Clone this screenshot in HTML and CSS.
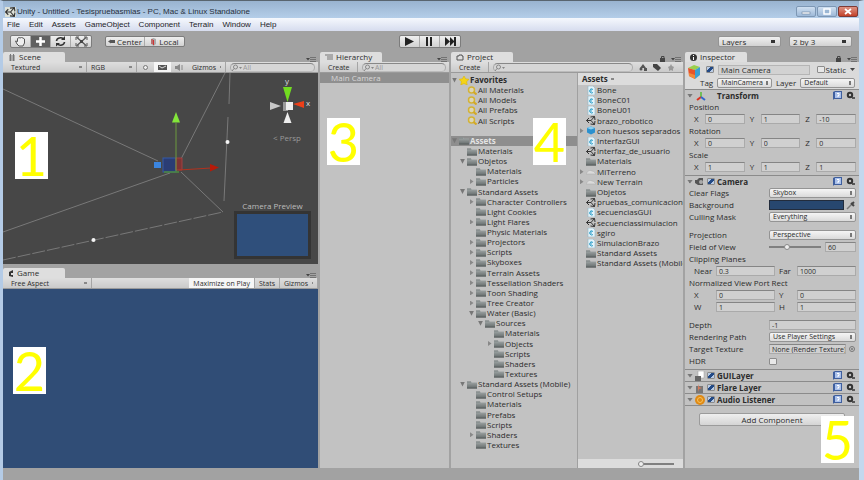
FILE: index.html
```html
<!DOCTYPE html>
<html lang="en">
<head>
<meta charset="utf-8">
<title>Unity - Untitled</title>
<link rel="stylesheet" href="styles.css">
</head>
<body>
<svg class="defs" aria-hidden="true">
  <defs>
    <linearGradient id="fg" x1="0" y1="0" x2="0" y2="1"><stop offset="0" stop-color="#a5abab"/><stop offset="1" stop-color="#626969"/></linearGradient>
    <symbol id="folder" viewBox="0 0 10 8"><path d="M0 1h4l1 1h5v6H0z" fill="url(#fg)"/><path d="M0 1.500h4" stroke="#7b8181"/><path d="M0 7.500h10" stroke="#5c6363"/></symbol>
    <symbol id="search" viewBox="0 0 10 9"><circle cx="4.500" cy="4" r="3" fill="#dcd6b8" stroke="#d3b336" stroke-width="1.500"/><path d="M6.500 6l3 2.500" stroke="#d3a926" stroke-width="2"/></symbol>
    <symbol id="star" viewBox="0 0 10 9"><path d="M5 0l1.600 2.800L10 3.300 7.600 5.700 8.200 9 5 7.500 1.800 9l.600-3.300L0 3.300l3.400-.500z" fill="#f5d416" stroke="#d6b000" stroke-width=".5"/></symbol>
    <symbol id="script" viewBox="0 0 10 9"><path d="M2 0h5l2 2v7H2z" fill="#e4f3fa" stroke="#8fb6c8" stroke-width=".6"/><path d="M7 3.500a2 2 0 1 0 0 3M5 2.500v4" stroke="#2f9fc9" fill="none"/></symbol>
    <symbol id="unity" viewBox="0 0 10 9"><path d="M3 2L0.500 4.500 3 7M0.500 4.500H5M4.500 1l4-.500.500 3.500M5 4.500L8.500.500M4.500 8l4 .500.500-3.500M5 4.500l3.500 4" stroke="#333" fill="none"/></symbol>
    <symbol id="prefab" viewBox="0 0 10 9"><path d="M1 2l4-1.500L9 2v4.500L5 8.500 1 6.500z" fill="#2b91cf"/><path d="M1 2l4 1.500L9 2 5 .500z" fill="#8bd0f2"/></symbol>
    <symbol id="terrain" viewBox="0 0 10 9"><path d="M0 7c2-4 4-4 6-3 2 0 3 2 4 3z" fill="#dadada" stroke="#aaa" stroke-width=".5"/></symbol>
    <symbol id="help" viewBox="0 0 9 9"><path d="M0 1l2-1h7v8H1L0 9z" fill="#3f5f9e"/><path d="M2 1h6v6H2z" fill="#a9c0ea"/><path d="M4 2.500h2v2H5v1.500" stroke="#fff" fill="none"/></symbol>
    <symbol id="gear" viewBox="0 0 9 9"><circle cx="4" cy="4" r="2.200" fill="none" stroke="#333" stroke-width="2"/><path d="M6 7h3" stroke="#333" stroke-width="1.500"/></symbol>
    <symbol id="menu" viewBox="0 0 10 6"><path d="M0 2h4L2 4.500z" fill="#444"/><path d="M4 1.500h6M4 3.500h6M4 5.500h6" stroke="#666" stroke-width=".8"/></symbol>
    <symbol id="lock" viewBox="0 0 6 7"><path d="M1.500 3V1.500h2.500V3" fill="none" stroke="#444"/><path d="M0 3h5v4H0z" fill="#444"/></symbol>
    <symbol id="lens" viewBox="0 0 12 7"><circle cx="4.500" cy="3" r="2" fill="none" stroke="#888"/><path d="M3 4.500L1 7" stroke="#888"/><path d="M8 3h3L9.500 5z" fill="#888"/></symbol>
  </defs>
</svg>

<div class="window">
  <header class="titlebar">
    <svg width="11" height="10" viewBox="0 0 10 9"><rect width="10" height="9" fill="#dfe2d8"/><use href="#unity"/></svg>
    <span class="title">Unity - Untitled - Tesispruebasmias - PC, Mac &amp; Linux Standalone</span>
    <button class="wbtn" aria-label="Minimize"><svg width="10" height="6"><rect x="1" y="3" width="8" height="2" fill="#fff" stroke="#68809c" stroke-width=".6"/></svg></button>
    <button class="wbtn" aria-label="Maximize"><svg width="10" height="7"><rect x="2" y="1" width="6" height="5" fill="#9bb7d4" stroke="#fff" stroke-width="1.500"/></svg></button>
    <button class="wbtn close" aria-label="Close"><svg width="8" height="7"><path d="M1 1l6 5M7 1L1 6" stroke="#fff" stroke-width="1.800"/></svg></button>
  </header>
  <nav class="menubar"><a href="#">File</a><a href="#">Edit</a><a href="#">Assets</a><a href="#">GameObject</a><a href="#">Component</a><a href="#">Terrain</a><a href="#">Window</a><a href="#">Help</a></nav>

  <div class="toolbar">
    <div class="group tools">
      <button aria-label="Hand"><svg width="13" height="11"><path d="M3 8L1.500 5l2 .500V2.500L5 1.500l1 .500 1.500-.500L9 2l1.500 1v4L9 10H5z" fill="#eee" stroke="#555"/></svg></button>
      <button class="on" aria-label="Move"><svg width="13" height="11"><path d="M6.500 1v9M2 5.500h9" stroke="#fff" stroke-width="2.500"/></svg></button>
      <button aria-label="Rotate"><svg width="13" height="11"><path d="M2.500 5a4 3.500 0 0 1 7-2M10.500 6a4 3.500 0 0 1-7 2" stroke="#333" stroke-width="1.600" fill="none"/><path d="M11 0v4H7zM2 10.500V7h4z" fill="#333"/></svg></button>
      <button aria-label="Scale"><svg width="13" height="11"><path d="M2 1.500l9 8M11 1.500l-9 8" stroke="#555" stroke-width="1.300"/><path d="M1 1h3M1 1v3M12 1H9M12 1v3M1 10h3M1 10V7M12 10H9M12 10V7" stroke="#555"/><rect x="5" y="4" width="3" height="3" fill="#444"/></svg></button>
    </div>
    <div class="group pivot">
      <button><svg width="7" height="5"><path d="M0 2.500l3-2v4zM3 1h4v3H3z" fill="#555"/></svg>Center</button>
      <button><svg width="7" height="8"><path d="M1 1l2.500-1L6 1v5L3.500 8 1 6z" fill="#aaa"/><path d="M3.500 2v5M2 1v5" stroke="#c33"/></svg>Local</button>
    </div>
    <div class="group play">
      <button aria-label="Play"><svg width="12" height="9"><path d="M2 0l9 4.500L2 9z" fill="#222"/></svg></button>
      <button aria-label="Pause"><svg width="10" height="9"><path d="M3 0v9M7 0v9" stroke="#222" stroke-width="2"/></svg></button>
      <button aria-label="Step"><svg width="12" height="9"><path d="M1 0l5 4.500V0l4 4V0h2v9h-2V5L6 9V4.500L1 9z" fill="#222"/></svg></button>
    </div>
    <div class="picks">
      <select class="big" aria-label="Layers"><option>Layers</option></select>
      <select class="big" aria-label="Layout"><option>2 by 3</option></select>
    </div>
  </div>

  <main class="panes">
    <div class="left">
      <section class="pane scene-pane">
        <div class="tabs"><h2 class="tab"><svg width="8" height="7"><path d="M1 2h6M1 4h6M1 6h6M2.500 0v7M5.500 0v7" stroke="#777"/></svg>Scene</h2><svg class="pm" width="10" height="6"><use href="#menu"/></svg></div>
        <div class="bar">
          <button class="dd w80">Textured<i></i></button><button class="dd w50">RGB<i></i></button>
          <button class="ib" aria-label="Light"><svg width="7" height="7"><circle cx="3.500" cy="3.500" r="2" fill="#eee" stroke="#777"/></svg></button>
          <button class="ib lit" aria-label="Effects"><svg width="9" height="6"><path d="M0 1h9v5H0z" fill="#555"/><path d="M1 2l3 2 4-2" stroke="#ddd" fill="none"/></svg></button>
          <button class="ib" aria-label="Audio"><svg width="9" height="7"><path d="M0 2h2l3-2v7L2 5H0z" fill="#888"/><path d="M7 1v5" stroke="#888"/></svg></button>
          <button class="dd w36">Gizmos<i></i></button>
          <label class="find"><svg width="12" height="7"><use href="#lens"/></svg><input aria-label="Search scene" placeholder="All"></label>
        </div>
        <div class="scene">
          <svg class="world" viewBox="0 0 315 191" preserveAspectRatio="xMidYMid slice">
            <g stroke="#858585" stroke-width=".8" fill="none"><path d="M0 16L155 88M222 0L178 86M0 159L167 100M178 99l42 40"/><path d="M0 187l220-48" stroke-dasharray="13 2"/><path d="M227 0l-1 31M225 44l-4 84"/></g>
            <rect x="160" y="85" width="13" height="14" fill="#2b3d74" stroke="#345ba8"/><path d="M173 85h6v12h-6z" fill="#7e3434" stroke="#a04040"/><path d="M161 99h15" stroke="#4e8b3c" stroke-width="1.500"/>
            <path d="M173 50v48" stroke="#6d9a3e"/><path d="M173 39l4 10.500h-8z" fill="#83e63a"/>
            <path d="M176 97l32-2" stroke="#b2321e"/><path d="M207 91l9 3.500-9 4z" fill="#b71a08"/>
            <rect x="151" y="89" width="7" height="6" fill="#3b85df"/>
            <g fill="#f4f4f4"><circle cx="224.500" cy="69" r="2"/><circle cx="90.500" cy="167" r="2"/></g>
            <path d="M280 14h9l-4.500 15z" fill="#72dd20"/><path d="M301 28l-11 3 11 4z" fill="#ed3f19"/><path d="M267 29l11 4-11 4z" fill="#c8c8c8"/><path d="M284.500 39l4 11h-8z" fill="#eee"/>
            <rect x="280" y="29" width="5" height="9" fill="#999"/><rect x="283" y="29" width="7" height="8" fill="#eee"/>
            <text x="282" y="11">y</text><text x="303" y="33">x</text><text class="dim" x="270" y="68">&lt; Persp</text>
          </svg>
          <div class="preview"><span>Camera Preview</span><div class="shot"></div></div>
          <b class="badge b1">1</b>
        </div>
      </section>
      <section class="pane game-pane">
        <div class="tabs"><h2 class="tab"><svg width="6" height="7"><path d="M5 0L1 2v4l4 1V5H3V3h2z" fill="#333"/></svg>Game</h2><svg class="pm" width="10" height="6"><use href="#menu"/></svg></div>
        <div class="bar"><button class="dd w84">Free Aspect<i></i></button><span class="grow"></span><button class="dd lit">Maximize on Play</button><button class="dd">Stats</button><button class="dd w36">Gizmos<i></i></button></div>
        <div class="game"><b class="badge b2">2</b></div>
      </section>
    </div>

    <section class="pane hierarchy">
      <div class="tabs"><h2 class="tab"><svg width="8" height="6"><path d="M0 1h8M2 3h6M2 5h6" stroke="#777"/></svg>Hierarchy</h2><svg class="pm" width="10" height="6"><use href="#menu"/></svg></div>
      <div class="bar"><button class="dd w40">Create<i></i></button><label class="find"><svg width="12" height="7"><use href="#lens"/></svg><input aria-label="Search hierarchy" placeholder="All"></label></div>
      <div class="body"><p class="selected">Main Camera</p><b class="badge b3">3</b></div>
    </section>

    <section class="pane project">
      <div class="tabs"><h2 class="tab"><svg width="8" height="7"><path d="M1 2h2V1h3v1h1v4H1z" fill="none" stroke="#555"/></svg>Project</h2><svg class="pm" width="6" height="7"><use href="#lock"/></svg><svg class="pm2" width="10" height="6"><use href="#menu"/></svg></div>
      <div class="bar"><button class="dd w40">Create<i></i></button><label class="find"><svg width="12" height="7"><use href="#lens"/></svg><input aria-label="Search project"></label>
        <button class="ib" aria-label="By type"><svg width="8" height="7"><path d="M4 0l3 4H1z" fill="#555"/><circle cx="2" cy="5" r="1.500" fill="#555"/><path d="M5 4h3v3H5z" fill="#555"/></svg></button><button class="ib" aria-label="By label"><svg width="8" height="7"><path d="M0 0h4l4 4-3 3-5-4z" fill="#444"/></svg></button><button class="ib" aria-label="Save search"><svg width="6" height="7"><path d="M3 0l1 2 2 1-1 2v2L3 6 1 7V5L0 3l2-1z" fill="#999"/></svg></button></div>
      <div class="split">
        <ul class="tree">
          <li class="open strong"><svg><use href="#star"/></svg>Favorites</li>
          <li class="d1"><svg><use href="#search"/></svg>All Materials</li>
          <li class="d1"><svg><use href="#search"/></svg>All Models</li>
          <li class="d1"><svg><use href="#search"/></svg>All Prefabs</li>
          <li class="d1"><svg><use href="#search"/></svg>All Scripts</li>
          <li></li>
          <li class="open strong sel"><svg><use href="#folder"/></svg>Assets</li>
          <li class="d1"><svg><use href="#folder"/></svg>Materials</li>
          <li class="d1 open"><svg><use href="#folder"/></svg>Objetos</li>
          <li class="d2"><svg><use href="#folder"/></svg>Materials</li>
          <li class="d2 shut"><svg><use href="#folder"/></svg>Particles</li>
          <li class="d1 open"><svg><use href="#folder"/></svg>Standard Assets</li>
          <li class="d2 shut"><svg><use href="#folder"/></svg>Character Controllers</li>
          <li class="d2"><svg><use href="#folder"/></svg>Light Cookies</li>
          <li class="d2 shut"><svg><use href="#folder"/></svg>Light Flares</li>
          <li class="d2"><svg><use href="#folder"/></svg>Physic Materials</li>
          <li class="d2 shut"><svg><use href="#folder"/></svg>Projectors</li>
          <li class="d2 shut"><svg><use href="#folder"/></svg>Scripts</li>
          <li class="d2 shut"><svg><use href="#folder"/></svg>Skyboxes</li>
          <li class="d2 shut"><svg><use href="#folder"/></svg>Terrain Assets</li>
          <li class="d2 shut"><svg><use href="#folder"/></svg>Tessellation Shaders</li>
          <li class="d2 shut"><svg><use href="#folder"/></svg>Toon Shading</li>
          <li class="d2 shut"><svg><use href="#folder"/></svg>Tree Creator</li>
          <li class="d2 open"><svg><use href="#folder"/></svg>Water (Basic)</li>
          <li class="d3 open"><svg><use href="#folder"/></svg>Sources</li>
          <li class="d4"><svg><use href="#folder"/></svg>Materials</li>
          <li class="d4 shut"><svg><use href="#folder"/></svg>Objects</li>
          <li class="d4"><svg><use href="#folder"/></svg>Scripts</li>
          <li class="d4"><svg><use href="#folder"/></svg>Shaders</li>
          <li class="d4"><svg><use href="#folder"/></svg>Textures</li>
          <li class="d1 open"><svg><use href="#folder"/></svg>Standard Assets (Mobile)</li>
          <li class="d2"><svg><use href="#folder"/></svg>Control Setups</li>
          <li class="d2"><svg><use href="#folder"/></svg>Materials</li>
          <li class="d2"><svg><use href="#folder"/></svg>Prefabs</li>
          <li class="d2"><svg><use href="#folder"/></svg>Scripts</li>
          <li class="d2 shut"><svg><use href="#folder"/></svg>Shaders</li>
          <li class="d2"><svg><use href="#folder"/></svg>Textures</li>
        </ul>
        <div class="files">
          <div class="crumb">Assets <i></i></div>
          <ul class="tree list">
            <li><svg><use href="#script"/></svg>Bone</li>
            <li><svg><use href="#script"/></svg>BoneC01</li>
            <li><svg><use href="#script"/></svg>BoneU01</li>
            <li><svg><use href="#unity"/></svg>brazo_robotico</li>
            <li class="shut"><svg><use href="#prefab"/></svg>con huesos separados</li>
            <li><svg><use href="#script"/></svg>InterfazGUI</li>
            <li><svg><use href="#unity"/></svg>interfaz_de_usuario</li>
            <li><svg><use href="#folder"/></svg>Materials</li>
            <li class="shut"><svg><use href="#terrain"/></svg>MiTerreno</li>
            <li class="shut"><svg><use href="#terrain"/></svg>New Terrain</li>
            <li><svg><use href="#folder"/></svg>Objetos</li>
            <li><svg><use href="#unity"/></svg>pruebas_comunicacion</li>
            <li><svg><use href="#script"/></svg>secuenciasGUI</li>
            <li><svg><use href="#unity"/></svg>secuenciassimulacion</li>
            <li><svg><use href="#script"/></svg>sgiro</li>
            <li><svg><use href="#script"/></svg>SimulacionBrazo</li>
            <li><svg><use href="#folder"/></svg>Standard Assets</li>
            <li><svg><use href="#folder"/></svg>Standard Assets (Mobile)</li>
          </ul>
          <div class="zoom"><input type="range" aria-label="Icon size" value="0"></div>
        </div>
        <b class="badge b4">4</b>
      </div>
    </section>

    <section class="pane inspector">
      <div class="tabs"><h2 class="tab"><svg width="7" height="7"><circle cx="3.500" cy="3.500" r="3.500" fill="#333"/><path d="M3.500 1v1M3.500 3v3" stroke="#fff"/></svg>Inspector</h2><svg class="pm" width="6" height="7"><use href="#lock"/></svg><svg class="pm2" width="10" height="6"><use href="#menu"/></svg></div>
      <div class="object">
        <svg class="cube" width="14" height="14"><path d="M1 3l6-3 6 2-5 3z" fill="#9ad04c"/><path d="M1 3l7 2v9l-6-3z" fill="#e7542b"/><path d="M8 5l5-3v8l-5 4z" fill="#3a9fd4"/><path d="M2 8l6 2v4l-6-3z" fill="#f08a3a"/></svg>
        <div class="orow"><input type="checkbox" checked aria-label="Active"><input class="name" aria-label="Name" value="Main Camera"><label class="static"><input type="checkbox">Static</label><i class="caret"></i></div>
        <div class="orow"><label for="tag">Tag</label><select id="tag"><option>MainCamera</option></select><label for="layer">Layer</label><select id="layer"><option>Default</option></select></div>
      </div>
      <div class="comp"><i class="fold"></i><svg width="12" height="10"><path d="M6 6V1" stroke="#5b3" stroke-width="1.500"/><path d="M6 6l-4 3" stroke="#d32" stroke-width="2"/><path d="M6 6l4 3" stroke="#36c" stroke-width="2"/></svg><h3 class="tr">Transform</h3><svg width="9" height="9"><use href="#help"/></svg><svg width="9" height="9"><use href="#gear"/></svg></div>
      <div class="props">
        <p>Position</p>
        <div class="vec"><label for="px">X</label><input id="px" value="0"><label for="py">Y</label><input id="py" value="1"><label for="pz">Z</label><input id="pz" value="-10"></div>
        <p>Rotation</p>
        <div class="vec"><label for="rx">X</label><input id="rx" value="0"><label for="ry">Y</label><input id="ry" value="0"><label for="rz">Z</label><input id="rz" value="0"></div>
        <p>Scale</p>
        <div class="vec"><label for="sx">X</label><input id="sx" value="1"><label for="sy">Y</label><input id="sy" value="1"><label for="sz">Z</label><input id="sz" value="1"></div>
      </div>
      <div class="comp"><i class="fold"></i><svg width="10" height="9"><path d="M0 3h2l2-2h4v7H3L0 6z" fill="#555"/><circle cx="6" cy="5" r="2" fill="#aaa"/></svg><input id="cam" type="checkbox" checked><h3><label for="cam">Camera</label></h3><svg width="9" height="9"><use href="#help"/></svg><svg width="9" height="9"><use href="#gear"/></svg></div>
      <div class="props">
        <div class="row"><label for="cf">Clear Flags</label><select id="cf"><option>Skybox</option></select></div>
        <div class="row"><label for="bg">Background</label><span class="colour"><button id="bg" class="swatch" aria-label="Background"></button><svg width="10" height="9"><path d="M1 8l5-5" stroke="#777" stroke-width="1.500"/><path d="M5 2l3 3M6 3l2-2" stroke="#444" stroke-width="2"/></svg></span></div>
        <div class="row"><label for="cm">Culling Mask</label><select id="cm"><option>Everything</option></select></div>
        <div class="row top"><label for="pj">Projection</label><select id="pj"><option>Perspective</option></select></div>
        <div class="row"><label for="fov">Field of View</label><span class="slide"><input id="fov" type="range" min="0" max="179" value="60"><input aria-label="Field of View value" value="60"></span></div>
        <p>Clipping Planes</p>
        <div class="pair"><label for="near">Near</label><input id="near" value="0.3"><label for="far">Far</label><input id="far" value="1000"></div>
        <p>Normalized View Port Rect</p>
        <div class="pair"><label for="vx">X</label><input id="vx" value="0"><label for="vy">Y</label><input id="vy" value="0"></div>
        <div class="pair"><label for="vw">W</label><input id="vw" value="1"><label for="vh">H</label><input id="vh" value="1"></div>
        <div class="row top"><label for="dp">Depth</label><input id="dp" value="-1"></div>
        <div class="row"><label for="rp">Rendering Path</label><select id="rp"><option>Use Player Settings</option></select></div>
        <div class="row"><label for="tt">Target Texture</label><span class="colour"><input id="tt" value="None (Render Texture)"><svg width="8" height="8"><circle cx="4" cy="4" r="2.500" fill="none" stroke="#777"/><circle cx="4" cy="4" r="1" fill="#777"/></svg></span></div>
        <div class="row"><label for="hdr">HDR</label><input id="hdr" type="checkbox"></div>
      </div>
      <div class="comp"><i class="fold"></i><svg width="10" height="10"><path d="M3 0h6v7H3z" fill="#fff" stroke="#999" stroke-width=".5"/><path d="M0 5h6v5H0z" fill="#666"/></svg><input id="gl" type="checkbox" checked><h3><label for="gl">GUILayer</label></h3><svg width="9" height="9"><use href="#help"/></svg><svg width="9" height="9"><use href="#gear"/></svg></div>
      <div class="comp"><i class="fold"></i><svg width="10" height="10"><path d="M1 3h7v7H1z" fill="#777"/><path d="M3 1l1 3 3 1-3 1-1 3" fill="#d87a5a"/></svg><input id="fl" type="checkbox" checked><h3><label for="fl">Flare Layer</label></h3><svg width="9" height="9"><use href="#help"/></svg><svg width="9" height="9"><use href="#gear"/></svg></div>
      <div class="comp last"><i class="fold"></i><svg width="10" height="10"><circle cx="5" cy="5" r="5" fill="#e08a14"/><circle cx="5" cy="5" r="2.500" fill="none" stroke="#f7c35c"/></svg><input id="al" type="checkbox" checked><h3><label for="al">Audio Listener</label></h3><svg width="9" height="9"><use href="#help"/></svg><svg width="9" height="9"><use href="#gear"/></svg></div>
      <button class="add">Add Component</button>
      <b class="badge b5">5</b>
    </section>
  </main>
</div>
</body>
</html>
```
FILE: styles.css
```css
* { box-sizing: border-box; margin: 0; padding: 0; }
body {
  font: 8px/10px "Open Sans", "Noto Sans", sans-serif;
  color: #2c2c2c;
  background: #a2a2a2;
}
button, input, select {
  font: inherit;
  color: inherit;
  border: 0;
  border-radius: 0;
  background: none;
  min-width: 0;
  appearance: none;
}
ul { list-style: none; }
svg { flex: none; }
.defs { position: absolute; width: 0; height: 0; }

.window {
  display: flex;
  flex-direction: column;
  min-height: 100vh;
  border-top: 1px solid #59656f;
  border-left: 3px solid #b4cbe6;
  border-right: 5px solid #c3d8ee;
}

.titlebar {
  display: flex;
  align-items: center;
  gap: 1px;
  height: 17px;
  padding: 4px 1px 0 2px;
  background: linear-gradient(#99b3cf, #b4cee9);
}
.titlebar, .menubar { font-family: "Liberation Sans", sans-serif; }
.titlebar .title { flex: 1; color: #26303c; }
.wbtn {
  display: grid;
  place-items: center;
  width: 20px;
  height: 11px;
  border: 1px solid #7d97b4;
  border-radius: 2px;
  background: linear-gradient(#cfdff0, #9db9d8);
}
.wbtn.close { border-color: #7e3a35; background: linear-gradient(#dd9384, #c3422a); }

.menubar {
  display: flex;
  align-items: center;
  gap: 9px;
  height: 13px;
  padding: 1px 4px 0;
  background: linear-gradient(#f5f8fd, #d6dcee);
}
.menubar a { color: #1d1d28; text-decoration: none; }

.toolbar {
  display: grid;
  grid-template-columns: auto auto 1fr auto;
  align-items: center;
  height: 21px;
  padding: 0 7px;
}
.group {
  display: flex;
  height: 13px;
  border: 1px solid #7c7c7c;
  border-radius: 2px;
  background: linear-gradient(#efefef, #d2d2d2);
}
.group button {
  display: flex;
  align-items: center;
  justify-content: center;
  gap: 2px;
  width: 20px;
  border-right: 1px solid #aaa;
}
.group button:last-child { border-right: 0; }
.group .on { background: #606060; }
.pivot { margin-left: 13px; height: 11px; }
.pivot button { width: 39px; }
.play { justify-self: center; margin-right: 44px; }
.picks { display: flex; gap: 8px; }

select {
  height: 10px;
  padding: 0 8px 0 3px;
  font-size: 7px;
  line-height: 8px;
  border: 1px solid #949494;
  border-radius: 2px;
  background: linear-gradient(#777, #777) right 3px center / 2px 4px no-repeat, linear-gradient(#f5f5f5, #dadada);
}
select.big {
  width: 63px;
  height: 11px;
  font-size: 8px;
  line-height: 9px;
  background: linear-gradient(#333, #333) right 5px center / 4px 3px no-repeat, linear-gradient(#f0f0f0, #d2d2d2);
}

.panes {
  flex: 1;
  display: grid;
  grid-template-columns: 315fr 129fr 232fr 174fr;
  gap: 2px;
  padding-bottom: 12px;
}
.left { display: flex; flex-direction: column; gap: 4px; min-width: 0; }
.pane { position: relative; display: flex; flex-direction: column; min-width: 0; }
.scene-pane { flex: 212; }
.game-pane { flex: 200; }

.tabs { display: flex; align-items: flex-end; height: 10px; padding-right: 2px; }
.tab {
  display: flex;
  align-items: center;
  gap: 3px;
  width: 62px;
  height: 10px;
  padding-left: 5px;
  border-radius: 2px 2px 0 0;
  background: #dedede;
  font-size: 8px;
  font-weight: 400;
}
.pm { margin-left: auto; }
.pm2 { margin-left: 5px; }
.bar {
  display: flex;
  align-items: stretch;
  height: 11px;
  padding-left: 4px;
  border-bottom: 1px solid #9a9a9a;
  background: linear-gradient(#dedede, #cacaca);
  font-size: 7px;
}
.dd {
  display: flex;
  align-items: center;
  gap: 4px;
  padding: 0 4px;
  border-right: 1px solid #a5a5a5;
  line-height: 9px;
  white-space: nowrap;
}
.dd i, .crumb i {
  width: 3px;
  height: 2px;
  margin-left: auto;
  background: #888;
}
.w84 { width: 85px; }
.w80 { width: 80px; }
.w50 { width: 50px; }
.w40 { width: 34px; }
.w36 { width: 38px; }
.ib { width: 17px; display: grid; place-items: center; }
.project .ib { width: 14px; }
.project .bar { padding-right: 5px; }
.lit { background: #f6f6f6; }
.grow { flex: 1; }
.find {
  flex: 1;
  display: flex;
  align-items: center;
  min-width: 0;
  margin: 1px 3px 0 4px;
  border: 1px solid #999;
  border-color: #888 #aaa #bbb;
  border-radius: 5px;
  background: #d6d6d6;
}
.find input { width: 100%; line-height: 8px; }
.find input::placeholder { color: #999; }

.scene { position: relative; flex: 1; background: #474747; overflow: hidden; }
.world { position: absolute; inset: 0; width: 100%; height: 100%; }
.world text { font-size: 8px; fill: #ddd; }
.world .dim { fill: #999; }
.preview {
  position: absolute;
  right: 7px;
  bottom: 5px;
  width: 77px;
  color: #bdbdbd;
  text-align: center;
  white-space: nowrap;
}
.shot { height: 48px; border: 3px solid #343434; background: #2f4f7b; }
.game { position: relative; flex: 1; background: #304d76; }

.badge {
  position: absolute;
  display: grid;
  place-items: center;
  width: 33px;
  height: 47px;
  background: #fff;
  color: #ff0;
  font: 400 54px/44px Lato, sans-serif;
}
.b1 { left: 12px; top: 59px; }
.b2 { left: 10px; top: 58px; }
.b3 { left: 7px; top: 45px; }
.b4 { left: 82px; top: 45px; }
.b5 { right: 5px; bottom: 5px; }

.body { position: relative; flex: 1; background: #c2c2c2; }
.selected { padding-left: 11px; background: #8f8f8f; color: #d8d8d8; }

.split {
  position: relative;
  flex: 1;
  display: grid;
  grid-template-columns: 126fr 106fr;
  background: #c2c2c2;
}
.tree {
  display: grid;
  grid-template-rows: repeat(37, 1fr);
  padding: 2px 0 18px;
  min-width: 0;
}
.tree li {
  display: flex;
  align-items: center;
  min-width: 0;
  padding-left: 1px;
  overflow: hidden;
  white-space: nowrap;
}
.tree li::before {
  content: "";
  flex: none;
  width: 5px;
  height: 5px;
  margin-right: 2px;
}
.tree .open::before, .fold { background: #777; clip-path: polygon(0 0, 100% 0, 50% 100%); }
.tree .shut::before { background: #888; clip-path: polygon(20% 0, 90% 50%, 20% 100%); }
.tree svg { width: 10px; height: 9px; margin-right: 1px; }
.tree .d1 { padding-left: 9px; }
.tree .d2 { padding-left: 18px; }
.tree .d3 { padding-left: 27px; }
.tree .d4 { padding-left: 36px; }
.tree .strong { font-weight: 700; }
.tree .sel { background: #8e8e8e; color: #e4e4e4; }
.files { display: flex; flex-direction: column; min-width: 0; border-left: 1px solid #a0a0a0; }
.crumb {
  display: flex;
  align-items: center;
  gap: 3px;
  height: 12px;
  padding-left: 4px;
  background: #dcdcdc;
  font-weight: 700;
}
.crumb i { margin: 0; }
.tree.list { flex: 1; grid-template-rows: repeat(36, 1fr); padding: 0 0 7px; }
.zoom { display: flex; align-items: center; height: 9px; padding: 0 9px 0 60px; background: #dcdcdc; }

input[type="range"] { width: 100%; height: 6px; background: linear-gradient(#808080, #808080) center / 100% 2px no-repeat; }
input[type="range"]::-webkit-slider-thumb {
  appearance: none;
  width: 6px;
  height: 6px;
  border: 1px solid #888;
  border-radius: 3px;
  background: #eee;
}
input[type="checkbox"] {
  flex: none;
  width: 8px;
  height: 7px;
  border: 1px solid #8c8c8c;
  border-radius: 1px;
  background: #e8e8e8;
}
input[type="checkbox"]:checked {
  background: linear-gradient(135deg, transparent 35%, #234a86 35% 65%, transparent 65%), #b9cbe4;
}

.inspector { background: linear-gradient(#a2a2a2 10px, #c2c2c2 10px); }
.object {
  position: relative;
  display: flex;
  flex-direction: column;
  gap: 2px;
  height: 27px;
  padding: 2px 4px 0 21px;
  background: #dadada;
}
.cube { position: absolute; left: 2px; top: 3px; }
.orow { display: flex; align-items: center; gap: 4px; height: 11px; }
.orow select { flex: 1; }
.orow label[for="tag"] { margin-left: -6px; }
.name { flex: 1; height: 10px; padding-left: 2px; line-height: 8px; border: 1px solid #b5b5b5; background: #d2d2d2; }
.static { display: flex; align-items: center; gap: 1px; margin-left: 3px; }
.caret { width: 5px; height: 3px; background: #444; clip-path: polygon(0 0, 100% 0, 50% 100%); }

.comp {
  display: flex;
  align-items: center;
  gap: 2px;
  height: 12px;
  padding: 0 4px 0 2px;
  border-top: 1px solid #8b8b8b;
}
.comp.last { height: 13px; border-bottom: 1px solid #8b8b8b; }
.comp h3 { flex: 1; font-size: 8px; font-weight: 700; }
.comp h3.tr { padding-left: 8px; }
.comp svg:last-child { margin-left: 2px; }
.fold { width: 6px; height: 4px; }
.props { padding: 0 3px 2px 4px; }
.props p { height: 12px; line-height: 12px; }
.props input:not([type]) {
  width: 100%;
  height: 10px;
  padding-left: 2px;
  font-size: 7px;
  line-height: 8px;
  border: 1px solid #aaa;
  border-top-color: #858585;
  background: #d0d0d0;
}
.vec, .pair, .row { display: grid; align-items: center; height: 12px; }
.vec { grid-template-columns: 6px 1fr 6px 1fr 6px 1fr; column-gap: 5px; padding-left: 5px; }
.pair { grid-template-columns: 18px 1fr 14px 1fr; column-gap: 4px; padding-left: 5px; }
.row { grid-template-columns: 80fr 87fr; }
.top { margin-top: 6px; }
.colour, .slide { display: flex; align-items: center; gap: 2px; }
.swatch { flex: 1; height: 10px; border: 1px solid #222c3c; background: #27476f; }
.slide { gap: 4px; }
.slide input[type="range"] { width: 52px; flex: none; }
.add {
  align-self: center;
  width: 146px;
  height: 13px;
  margin-top: 7px;
  border: 1px solid #9b9b9b;
  border-radius: 2px;
  background: linear-gradient(#efefef, #d4d4d4);
}
```
